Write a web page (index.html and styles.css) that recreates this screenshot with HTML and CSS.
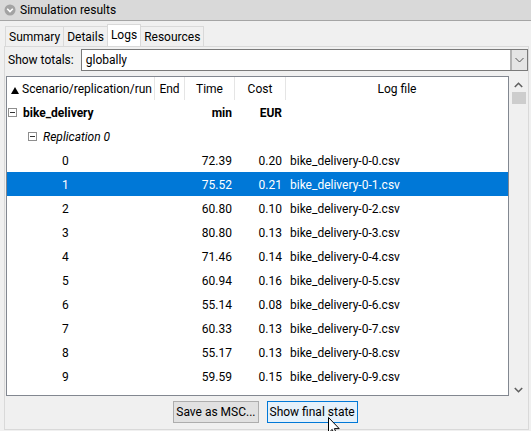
FILE: index.html
```
<!DOCTYPE html>
<html lang="en">
<head>
    <link rel="stylesheet" href="styles.css">
</head>
<body>
    <div class="titlebar">
        <svg class="collapse-icon" width="12" height="12" viewBox="0 0 12 12">
            <circle cx="6" cy="6" r="5.5" fill="#a3a3a3"/>
            <path d="M3.2 4.8 L6 7.6 L8.8 4.8" fill="none" stroke="#fff" stroke-width="1.6"/>
        </svg>
        <span>Simulation results</span>
    </div>

    <div class="tabs">
        <div class="tab">Summary</div>
        <div class="tab">Details</div>
        <div class="tab active">Logs</div>
        <div class="tab">Resources</div>
    </div>

    <div class="panel">
        <div class="totals">
            <span class="totals-label">Show totals:</span>
            <div class="combo">
                <span class="combo-text">globally</span>
                <div class="combo-btn">
                    <svg width="9" height="6" viewBox="0 0 9 6"><path d="M0.5 1 L4.5 5 L8.5 1" fill="none" stroke="#555" stroke-width="1"/></svg>
                </div>
            </div>
        </div>

        <div class="list-area">
            <div class="list">
                <table>
                    <colgroup>
                        <col class="c-name"><col class="c-end"><col class="c-time"><col class="c-cost"><col class="c-log">
                    </colgroup>
                    <tr class="head">
                        <td class="h-name"><svg class="sort" width="8" height="7" viewBox="0 0 8 7"><path d="M4 0 L8 7 L0 7 Z" fill="#000"/></svg>Scenario/replication/run</td>
                        <td class="h-mid">End</td>
                        <td class="h-mid">Time</td>
                        <td class="h-mid">Cost</td>
                        <td class="h-log">Log file</td>
                    </tr>
                    <tr class="bold">
                        <td class="lvl0"><span class="exp"></span>bike_delivery</td>
                        <td></td>
                        <td class="num">min</td>
                        <td class="num cost">EUR</td>
                        <td></td>
                    </tr>
                    <tr>
                        <td class="lvl1"><span class="exp"></span><i>Replication 0</i></td>
                        <td></td><td></td><td></td><td></td>
                    </tr>
                    <tr><td class="run">0</td><td></td><td class="num">72.39</td><td class="num cost">0.20</td><td class="file">bike_delivery-0-0.csv</td></tr>
                    <tr class="sel"><td class="run">1</td><td></td><td class="num">75.52</td><td class="num cost">0.21</td><td class="file">bike_delivery-0-1.csv</td></tr>
                    <tr><td class="run">2</td><td></td><td class="num">60.80</td><td class="num cost">0.10</td><td class="file">bike_delivery-0-2.csv</td></tr>
                    <tr><td class="run">3</td><td></td><td class="num">80.80</td><td class="num cost">0.13</td><td class="file">bike_delivery-0-3.csv</td></tr>
                    <tr><td class="run">4</td><td></td><td class="num">71.46</td><td class="num cost">0.14</td><td class="file">bike_delivery-0-4.csv</td></tr>
                    <tr><td class="run">5</td><td></td><td class="num">60.94</td><td class="num cost">0.16</td><td class="file">bike_delivery-0-5.csv</td></tr>
                    <tr><td class="run">6</td><td></td><td class="num">55.14</td><td class="num cost">0.08</td><td class="file">bike_delivery-0-6.csv</td></tr>
                    <tr><td class="run">7</td><td></td><td class="num">60.33</td><td class="num cost">0.13</td><td class="file">bike_delivery-0-7.csv</td></tr>
                    <tr><td class="run">8</td><td></td><td class="num">55.17</td><td class="num cost">0.13</td><td class="file">bike_delivery-0-8.csv</td></tr>
                    <tr><td class="run">9</td><td></td><td class="num">59.59</td><td class="num cost">0.15</td><td class="file">bike_delivery-0-9.csv</td></tr>
                </table>
            </div>
            <div class="scrollbar">
                <svg class="arrow" width="9" height="6" viewBox="0 0 9 6"><path d="M0.8 5 L4.5 1.3 L8.2 5" fill="none" stroke="#606060" stroke-width="1.6"/></svg>
                <div class="thumb"></div>
                <div class="track"></div>
                <svg class="arrow" width="9" height="6" viewBox="0 0 9 6"><path d="M0.8 1 L4.5 4.7 L8.2 1" fill="none" stroke="#606060" stroke-width="1.6"/></svg>
            </div>
        </div>

        <div class="buttons">
            <button class="btn">Save as MSC...</button>
            <button class="btn hover">Show final state</button>
        </div>
    </div>

    <svg class="cursor" width="12" height="19" viewBox="0 0 12 19">
        <path d="M0.5 0.5 L0.5 16 L4.2 12.4 L6.6 18 L8.8 17 L6.4 11.6 L11.2 11.6 Z" fill="#fff" stroke="#000" stroke-width="1"/>
    </svg>
</body>
</html>
```

FILE: styles.css
```
body
{
    margin: 0;
    width: 531px;
    height: 431px;
    overflow: hidden;
    background-color: #f0f0f0;
    font-family: Roboto, "Noto Sans", sans-serif;
    font-size: 12px;
    color: #000;
    position: relative;
}
.titlebar
{
    height: 20px;
    background-color: #d9d9d9;
    border-bottom: 1px solid #a5a5a5;
    display: flex;
    align-items: center;
    padding-left: 4px;
    gap: 4px;
    font-size: 12px;
}
.tabs
{
    display: flex;
    align-items: flex-end;
    height: 22px;
    margin-top: 3px;
    padding-left: 5px;
}
.tab
{
    height: 19px;
    line-height: 20px;
    padding: 0 3px;
    border: 1px solid #d9d9d9;
    border-bottom: none;
    margin-right: -1px;
    background-color: #f0f0f0;
}
.tab.active
{
    height: 21px;
    line-height: 20px;
    background-color: #fff;
    position: relative;
    z-index: 1;
}
.panel
{
    margin-left: 4px;
    width: 523px;
    height: 382px;
    border: 1px solid #d9d9d9;
    display: flex;
    flex-direction: column;
}
.totals
{
    display: flex;
    align-items: center;
    margin-top: 2px;
    height: 22px;
}
.totals-label
{
    padding-left: 3px;
    width: 70px;
}
.combo
{
    display: flex;
    width: 447px;
    height: 20px;
    border: 1px solid #7a7a7a;
    background-color: #fff;
    margin-left: 3px;
}
.combo-text
{
    flex: 1;
    padding-left: 4px;
    line-height: 21px;
}
.combo-btn
{
    width: 15px;
    background-color: #e5e5e5;
    border-left: 2px solid #b3b3b3;
    display: flex;
    align-items: center;
    justify-content: center;
}
.list-area
{
    display: flex;
    margin-top: 5px;
    margin-left: 1px;
    height: 321px;
}
.list
{
    width: 501px;
    height: 318px;
    border: 1px solid #828790;
    background-color: #fff;
    overflow: hidden;
}
table
{
    border-spacing: 0;
    table-layout: fixed;
    width: 501px;
}
.c-name { width: 148px; }
.c-end { width: 30px; }
.c-time { width: 50px; }
.c-cost { width: 51px; }
.c-log { width: 222px; }
td
{
    height: 23px;
    padding: 1px 0 0 0;
    white-space: nowrap;
    overflow: hidden;
}
.head td
{
    height: 22px;
    border-right: 1px solid #e5e5e5;
    text-align: center;
}
.head .h-name
{
    text-align: left;
    padding-left: 4px;
}
.head .h-log
{
    border-right: none;
}
.sort
{
    margin-right: 3px;
    vertical-align: -1px;
}
.bold td
{
    font-weight: bold;
}
.exp
{
    display: inline-block;
    width: 7px;
    height: 7px;
    border: 1px solid #8e8e8e;
    position: relative;
    vertical-align: middle;
    margin-top: -2px;
}
.exp::after
{
    content: "";
    position: absolute;
    left: 1px;
    top: 3px;
    width: 5px;
    height: 1px;
    background-color: #333;
}
.lvl0
{
    padding-left: 1px;
}
.lvl0 .exp
{
    margin-right: 6px;
}
.lvl1
{
    padding-left: 21px;
}
.lvl1 .exp
{
    margin-right: 6px;
}
.run
{
    padding-left: 55px;
}
.num
{
    text-align: right;
    padding-right: 3px;
}
.num.cost
{
    padding-right: 4px;
}
.file
{
    padding-left: 4px;
}
.sel td
{
    background-color: #0078d7;
    color: #fff;
}
.scrollbar
{
    width: 17px;
    margin-left: 1px;
    display: flex;
    flex-direction: column;
    align-items: center;
}
.scrollbar .arrow
{
    margin-top: 6px;
    margin-bottom: 4px;
}
.thumb
{
    width: 14px;
    height: 12px;
    background-color: #cdcdcd;
}
.track
{
    flex: 1;
}
.buttons
{
    display: flex;
    justify-content: center;
    gap: 8px;
    margin-top: 4px;
    padding-right: 2px;
}
.btn
{
    height: 22px;
    font-family: Roboto, "Noto Sans", sans-serif;
    font-size: 12px;
    padding: 0 2px;
    background-color: #e1e1e1;
    border: 1px solid #adadad;
    color: #000;
}
.btn.hover
{
    background-color: #e5f1fb;
    border-color: #0078d7;
}
.cursor
{
    position: absolute;
    left: 328px;
    top: 417px;
}
```
